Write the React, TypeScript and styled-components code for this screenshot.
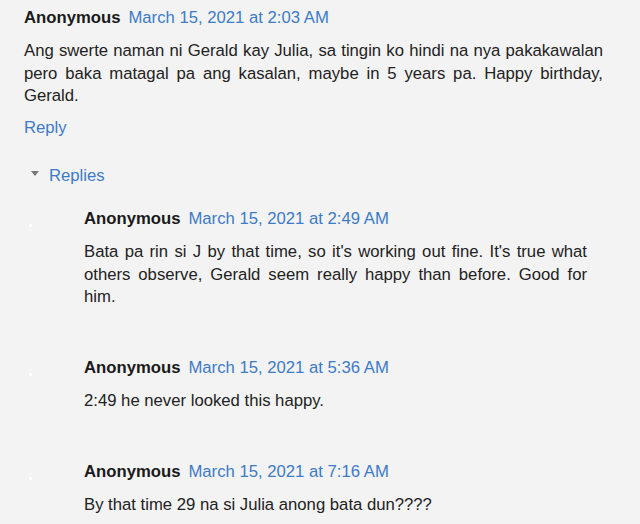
import styled, { createGlobalStyle } from 'styled-components';

const GlobalStyle = createGlobalStyle`
  html, body {
    margin: 0;
    padding: 0;
    background: #f3f3f3;
  }
  body {
    font-family: "Liberation Sans", Arial, sans-serif;
    font-size: 16.7px;
    line-height: 22.5px;
    color: #222;
  }
`;

type Reply = {
    id: number;
    author: string;
    date: string;
    text: string;
};

const replies: Reply[] = [
    {
        id: 1,
        author: 'Anonymous',
        date: 'March 15, 2021 at 2:49 AM',
        text: "Bata pa rin si J by that time, so it's working out fine. It's true what others observe, Gerald seem really happy than before. Good for him.",
    },
    {
        id: 2,
        author: 'Anonymous',
        date: 'March 15, 2021 at 5:36 AM',
        text: '2:49 he never looked this happy.',
    },
    {
        id: 3,
        author: 'Anonymous',
        date: 'March 15, 2021 at 7:16 AM',
        text: 'By that time 29 na si Julia anong bata dun????',
    },
];

const App = (): JSX.Element => {
    return (
        <>
            <GlobalStyle />
            <Page>
                <Comment>
                    <Header>
                        <Author>Anonymous</Author>
                        <DateLink>March 15, 2021 at 2:03 AM</DateLink>
                    </Header>
                    <Body>
                        Ang swerte naman ni Gerald kay Julia, sa tingin ko hindi na nya pakakawalan
                        pero baka matagal pa ang kasalan, maybe in 5 years pa. Happy birthday, Gerald.
                    </Body>
                    <ReplyLink>Reply</ReplyLink>
                </Comment>
                <RepliesToggle>
                    <Triangle />
                    <ToggleLabel>Replies</ToggleLabel>
                </RepliesToggle>
                <ReplyList>
                    {replies.map(reply =>
                        <ReplyItem key={reply.id}>
                            <Marker>
                                <Dot />
                            </Marker>
                            <ReplyContent>
                                <Header>
                                    <Author>{reply.author}</Author>
                                    <DateLink>{reply.date}</DateLink>
                                </Header>
                                <Body>{reply.text}</Body>
                            </ReplyContent>
                        </ReplyItem>
                    )}
                </ReplyList>
            </Page>
        </>
    )
}

export default App;


const Page = styled.div`
  width: 640px;
  height: 524px;
  overflow: hidden;
  padding-top: 7px;
  box-sizing: border-box;
`

const Comment = styled.div`
  padding: 0 37px 0 24px;
`

const Header = styled.div`
  display: flex;
  align-items: baseline;
  gap: 8px;
  height: 22.5px;
`

const Author = styled.span`
  font-weight: bold;
  color: #1a1a1a;
`

const DateLink = styled.a`
  color: #3d7bc6;
  text-decoration: none;
  cursor: pointer;
`

const Body = styled.p`
  margin: 10.5px 0 0;
  text-align: justify;
`

const ReplyLink = styled.a`
  display: block;
  margin-top: 9px;
  color: #3d7bc6;
  cursor: pointer;
`

const RepliesToggle = styled.div`
  display: flex;
  align-items: center;
  margin-top: 25.5px;
  padding-left: 31px;
  gap: 10px;
  height: 22.5px;
  cursor: pointer;
`

const Triangle = styled.span`
  width: 0;
  height: 0;
  border-left: 4.5px solid transparent;
  border-right: 4.5px solid transparent;
  border-top: 5px solid #777;
  margin-top: -4px;
`

const ToggleLabel = styled.span`
  color: #3d7bc6;
`

const ReplyList = styled.div`
  margin-top: 21px;
  display: flex;
  flex-direction: column;
  gap: 48.5px;
`

const ReplyItem = styled.div`
  display: flex;
`

const Marker = styled.div`
  width: 84px;
  flex-shrink: 0;
`

const Dot = styled.div`
  width: 3px;
  height: 3px;
  margin: 16px 0 0 29px;
  background: #fff;
`

const ReplyContent = styled.div`
  width: 503px;
`
